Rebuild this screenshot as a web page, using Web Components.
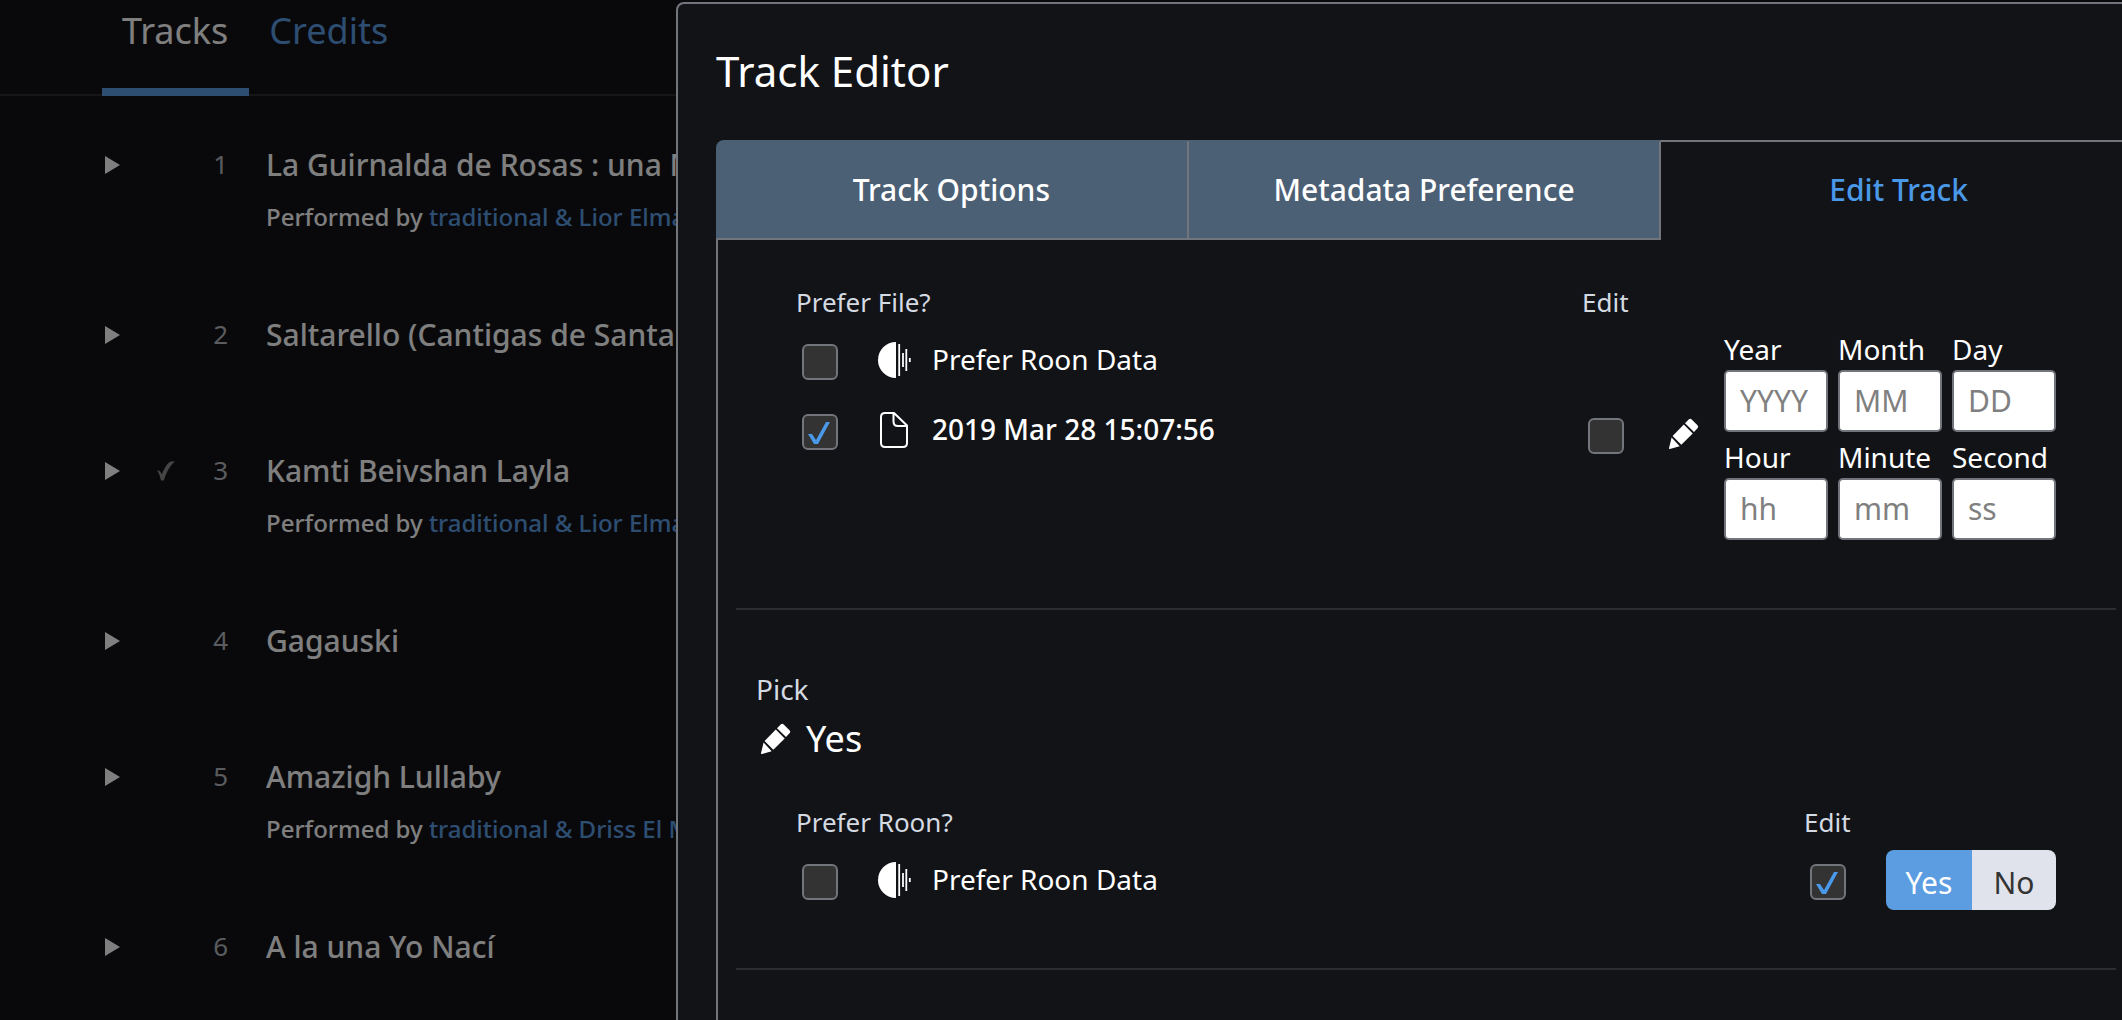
<!DOCTYPE html>
<html lang="en">
<head>
<meta charset="utf-8">
<title>Track Editor</title>
<style>
    :root {
        --bg: #121317;
        --blue: #4a98e8;
        --tab-blue: #5c9de2;
        --border: #72767c;
        --muted: #d4dae2;
    }
    html, body {
        height: 100%;
    }
    body {
        margin: 0;
        overflow: hidden;
        background: var(--bg);
        color: #fff;
        font-family: "Noto Sans", "Open Sans", sans-serif;
    }
</style>
</head>
<body>
<album-page>
    <track-row num="1" artists="traditional &amp; Lior Elmaleh">La Guirnalda de Rosas : una Matica de Ruda</track-row>
    <track-row num="2">Saltarello (Cantigas de Santa Maria)</track-row>
    <track-row num="3" picked artists="traditional &amp; Lior Elmaleh">Kamti Beivshan Layla</track-row>
    <track-row num="4">Gagauski</track-row>
    <track-row num="5" artists="traditional &amp; Driss El Maloumi">Amazigh Lullaby</track-row>
    <track-row num="6">A la una Yo Nací</track-row>
</album-page>

<track-editor heading="Track Editor">
    <edit-section prefer="Prefer File?">
        <pref-option icon="roon">Prefer Roon Data</pref-option>
        <pref-option icon="file" checked>2019 Mar 28 15:07:56</pref-option>
        <date-edit slot="edit"></date-edit>
    </edit-section>
    <edit-section name="Pick" value="Yes" prefer="Prefer Roon?">
        <pref-option icon="roon">Prefer Roon Data</pref-option>
        <yes-no-edit slot="edit"></yes-no-edit>
    </edit-section>
</track-editor>

<script>
const icons = {
    play: '<path fill="currentColor" d="M11 9L26 18L11 27Z"/>',
    picked: '<path fill="#8a8a8a" d="M9 17.500C11.500 17 12.500 18.500 13.800 21.500C16.500 15 19.500 9.500 23 8.500H27C22 12.500 18.500 19 15.800 27.500H13C12 23 11 20 9 17.500Z"/>',
    roon: '<path fill="#fff" d="M20 0A18 18 0 0 0 20 36Z"/><path stroke="#fff" stroke-width="1.800" d="M23.200 2V34M27 11V25M30.300 7V29M33.800 16V20"/>',
    file: '<path fill="none" stroke="#fff" stroke-width="2" stroke-linejoin="round" d="M18 1H9Q5 1 5 5V31Q5 35 9 35H27Q31 35 31 31V13.500L18 1ZM17.500 1V9.500Q17.500 14 22 14H31"/>',
    pencil: '<path fill="#fff" d="M22.700 3.500Q24.200 2 25.700 3.500L31.500 9.300Q33 10.800 31.500 12.300L28 16L19 7.200ZM17.800 8.600L26.700 17.400L15.300 28.700L6.600 19.900ZM5.600 21.400L13.700 30.300L3.800 33Q2.900 33.200 3 32.300Z"/>'
};

const svg = (name) => `<svg width="36" height="36" viewBox="0 0 36 36" aria-hidden="true">${icons[name]}</svg>`;

// shared by every element that holds a tick box
const checkStyle = `
    input[type=checkbox] {
        appearance: none;
        box-sizing: border-box;
        flex: none;
        width: 36px;
        height: 36px;
        margin: 4px 0 0 6px;
        border: 2px solid #73757c;
        border-radius: 6px;
        background: #333;
    }
    input[type=checkbox]:checked::before {
        content: "";
        display: block;
        width: 32px;
        height: 32px;
        background: var(--blue);
        clip-path: polygon(4px 18px, 8px 18px, 12px 24px, 22px 6px, 26px 6px, 14px 28px, 10px 28px);
    }
    svg {
        display: block;
        flex: none;
    }
`;

class AlbumPage extends HTMLElement {
    constructor() {
        super();
        this.attachShadow({mode: "open"}).innerHTML = `
            <style>
                :host {
                    display: block;
                }
                nav {
                    display: flex;
                    padding-left: 102px;
                    border-bottom: 2px solid #2c2d31;
                }
                a {
                    padding: 6px 21px 32px 20px;
                    margin-bottom: -2px;
                    border-bottom: 8px solid transparent;
                    color: var(--tab-blue);
                    font-size: 36px;
                    line-height: 50px;
                    text-decoration: none;
                }
                a.active {
                    color: #fff;
                    border-color: var(--tab-blue);
                }
                main {
                    padding-top: 1px;
                }
            </style>
            <nav>
                <a class="active" href="#tracks">Tracks</a>
                <a href="#credits">Credits</a>
            </nav>
            <main><slot></slot></main>
        `;
    }
}

class TrackRow extends HTMLElement {
    connectedCallback() {
        const artists = this.getAttribute("artists");
        this.attachShadow({mode: "open"}).innerHTML = `
            <style>
                :host {
                    display: flex;
                    align-items: flex-start;
                    padding: 48px 0 33px 94px;
                }
                button {
                    padding: 2px 0;
                    border: 0;
                    background: none;
                    color: #fff;
                }
                svg {
                    display: block;
                }
                .picked {
                    width: 36px;
                    padding: 2px 0 0 18px;
                }
                .num {
                    width: 44px;
                    color: #b4b8bf;
                    font-size: 26px;
                    line-height: 38px;
                    text-align: right;
                }
                .info {
                    padding-left: 38px;
                    white-space: nowrap;
                    font-weight: 500;
                }
                .title {
                    margin-bottom: 15px;
                    font-size: 30px;
                    line-height: 40px;
                }
                .artists {
                    font-size: 24px;
                    line-height: 34px;
                }
                a {
                    color: var(--tab-blue);
                    text-decoration: none;
                }
            </style>
            <button aria-label="Play">${svg("play")}</button>
            <div class="picked">${this.hasAttribute("picked") ? svg("picked") : ""}</div>
            <div class="num">${this.getAttribute("num")}</div>
            <div class="info">
                <div class="title"><slot></slot></div>
                ${artists ? `<div class="artists">Performed by <a href="#artists">${artists.replace("&", "&amp;")}</a></div>` : ""}
            </div>
        `;
    }
}

class TrackEditor extends HTMLElement {
    connectedCallback() {
        this.attachShadow({mode: "open"}).innerHTML = `
            <style>
                /* backdrop over the whole page */
                :host {
                    position: fixed;
                    inset: 0;
                    display: flex;
                    overflow: hidden;
                    background: rgba(0, 0, 0, 0.5);
                }
                .dialog {
                    flex: 1;
                    display: flex;
                    flex-direction: column;
                    margin: 2px -56px -20px 676px;
                    padding: 0 38px;
                    border: 2px solid var(--border);
                    border-radius: 8px;
                    background: var(--bg);
                }
                h1 {
                    margin: 0;
                    padding: 37px 0 39px;
                    font-size: 42px;
                    font-weight: 400;
                    line-height: 60px;
                }
                .tabs {
                    display: flex;
                    flex: none;
                }
                button {
                    box-sizing: content-box;
                    flex: 1;
                    height: 94px;
                    padding: 0 0 2px;
                    border: 2px solid var(--border);
                    border-top-color: #4c6075;
                    border-left: 0;
                    background: #4c6075;
                    color: #fff;
                    font: inherit;
                    font-size: 30px;
                    font-weight: 500;
                }
                button:first-child {
                    border-top-left-radius: 8px;
                }
                button.active {
                    padding: 0 2px 2px;
                    border-top-color: var(--border);
                    border-bottom-color: transparent;
                    background: none;
                    color: var(--blue);
                }
                .panel {
                    flex: 1;
                    padding: 0 20px 0 18px;
                    border: solid var(--border);
                    border-width: 0 2px;
                }
            </style>
            <div class="dialog" role="dialog" aria-labelledby="heading">
                <h1 id="heading">${this.getAttribute("heading")}</h1>
                <div class="tabs" role="tablist">
                    <button role="tab">Track Options</button>
                    <button role="tab">Metadata Preference</button>
                    <button role="tab" class="active" aria-selected="true">Edit Track</button>
                </div>
                <div class="panel"><slot></slot></div>
            </div>
        `;
    }
}

class EditSection extends HTMLElement {
    connectedCallback() {
        const name = this.getAttribute("name");
        this.attachShadow({mode: "open"}).innerHTML = `
            <style>
                :host {
                    display: block;
                    padding: 42px 20px 53px;
                    border-bottom: 2px solid #2c2d31;
                }
                .name {
                    padding-top: 18px;
                    color: var(--muted);
                    font-size: 28px;
                    line-height: 38px;
                }
                .value {
                    display: flex;
                    align-items: center;
                    gap: 12px;
                    padding: 6px 0 38px 2px;
                    font-size: 36px;
                    line-height: 50px;
                }
                .columns {
                    display: flex;
                    justify-content: space-between;
                    padding: 0 40px;
                }
                .label {
                    margin-bottom: 3px;
                    color: var(--muted);
                    font-size: 26px;
                    line-height: 40px;
                }
            </style>
            ${name ? `
                <div class="name">${name}</div>
                <div class="value">${svg("pencil")}${this.getAttribute("value")}</div>
            ` : ""}
            <div class="columns">
                <div>
                    <div class="label">${this.getAttribute("prefer")}</div>
                    <slot></slot>
                </div>
                <div>
                    <div class="label">Edit</div>
                    <slot name="edit"></slot>
                </div>
            </div>
        `;
    }
}

class PrefOption extends HTMLElement {
    connectedCallback() {
        const checked = this.hasAttribute("checked");
        this.attachShadow({mode: "open"}).innerHTML = `
            <style>
                ${checkStyle}
                :host {
                    display: block;
                    font-size: 28px;
                    line-height: 40px;
                }
                :host([checked]) {
                    font-weight: 500;
                }
                label {
                    display: flex;
                    align-items: center;
                    height: 70px;
                }
                svg {
                    margin: 0 20px 0 38px;
                }
                span {
                    padding-bottom: 2px;
                }
            </style>
            <label>
                <input type="checkbox" ${checked ? "checked" : ""}>
                ${svg(this.getAttribute("icon"))}
                <span><slot></slot></span>
            </label>
        `;
    }
}

class DateField extends HTMLElement {
    connectedCallback() {
        this.attachShadow({mode: "open"}).innerHTML = `
            <style>
                :host {
                    display: block;
                }
                label {
                    display: block;
                    font-size: 28px;
                    line-height: 42px;
                }
                input {
                    display: block;
                    box-sizing: border-box;
                    width: 100%;
                    height: 62px;
                    padding: 0 14px 2px;
                    border: 2px solid #73757c;
                    border-radius: 5px;
                    background: #fff;
                    font: inherit;
                    font-size: 30px;
                }
                input::placeholder {
                    color: #808080;
                }
            </style>
            <label for="field"><slot></slot></label>
            <input id="field" type="text" placeholder="${this.getAttribute("hint")}">
        `;
    }
}

class DateEdit extends HTMLElement {
    constructor() {
        super();
        this.attachShadow({mode: "open"}).innerHTML = `
            <style>
                ${checkStyle}
                :host {
                    display: flex;
                    align-items: center;
                    padding: 3px 0 15px;
                }
                svg {
                    margin: 0 22px 0 42px;
                }
                .fields {
                    display: grid;
                    grid-template-columns: repeat(3, 104px);
                    gap: 4px 10px;
                }
            </style>
            <input type="checkbox" aria-label="Edit">
            ${svg("pencil")}
            <div class="fields">
                <date-field hint="YYYY">Year</date-field>
                <date-field hint="MM">Month</date-field>
                <date-field hint="DD">Day</date-field>
                <date-field hint="hh">Hour</date-field>
                <date-field hint="mm">Minute</date-field>
                <date-field hint="ss">Second</date-field>
            </div>
        `;
    }
}

class YesNoEdit extends HTMLElement {
    constructor() {
        super();
        this.attachShadow({mode: "open"}).innerHTML = `
            <style>
                ${checkStyle}
                :host {
                    display: flex;
                    align-items: center;
                    padding: 5px 0;
                }
                .toggle {
                    display: flex;
                    margin-left: 40px;
                    border-radius: 8px;
                    overflow: hidden;
                }
                button {
                    width: 84px;
                    height: 60px;
                    padding: 4px 0 0;
                    border: 0;
                    background: #e0e3eb;
                    color: #333;
                    font: inherit;
                    font-size: 30px;
                }
                button.on {
                    width: 86px;
                    background: var(--tab-blue);
                    color: #fff;
                }
            </style>
            <input type="checkbox" aria-label="Edit" checked>
            <div class="toggle">
                <button class="on" aria-pressed="true">Yes</button>
                <button aria-pressed="false">No</button>
            </div>
        `;
    }
}

customElements.define("album-page", AlbumPage);
customElements.define("track-row", TrackRow);
customElements.define("track-editor", TrackEditor);
customElements.define("edit-section", EditSection);
customElements.define("pref-option", PrefOption);
customElements.define("date-field", DateField);
customElements.define("date-edit", DateEdit);
customElements.define("yes-no-edit", YesNoEdit);
</script>
</body>
</html>
